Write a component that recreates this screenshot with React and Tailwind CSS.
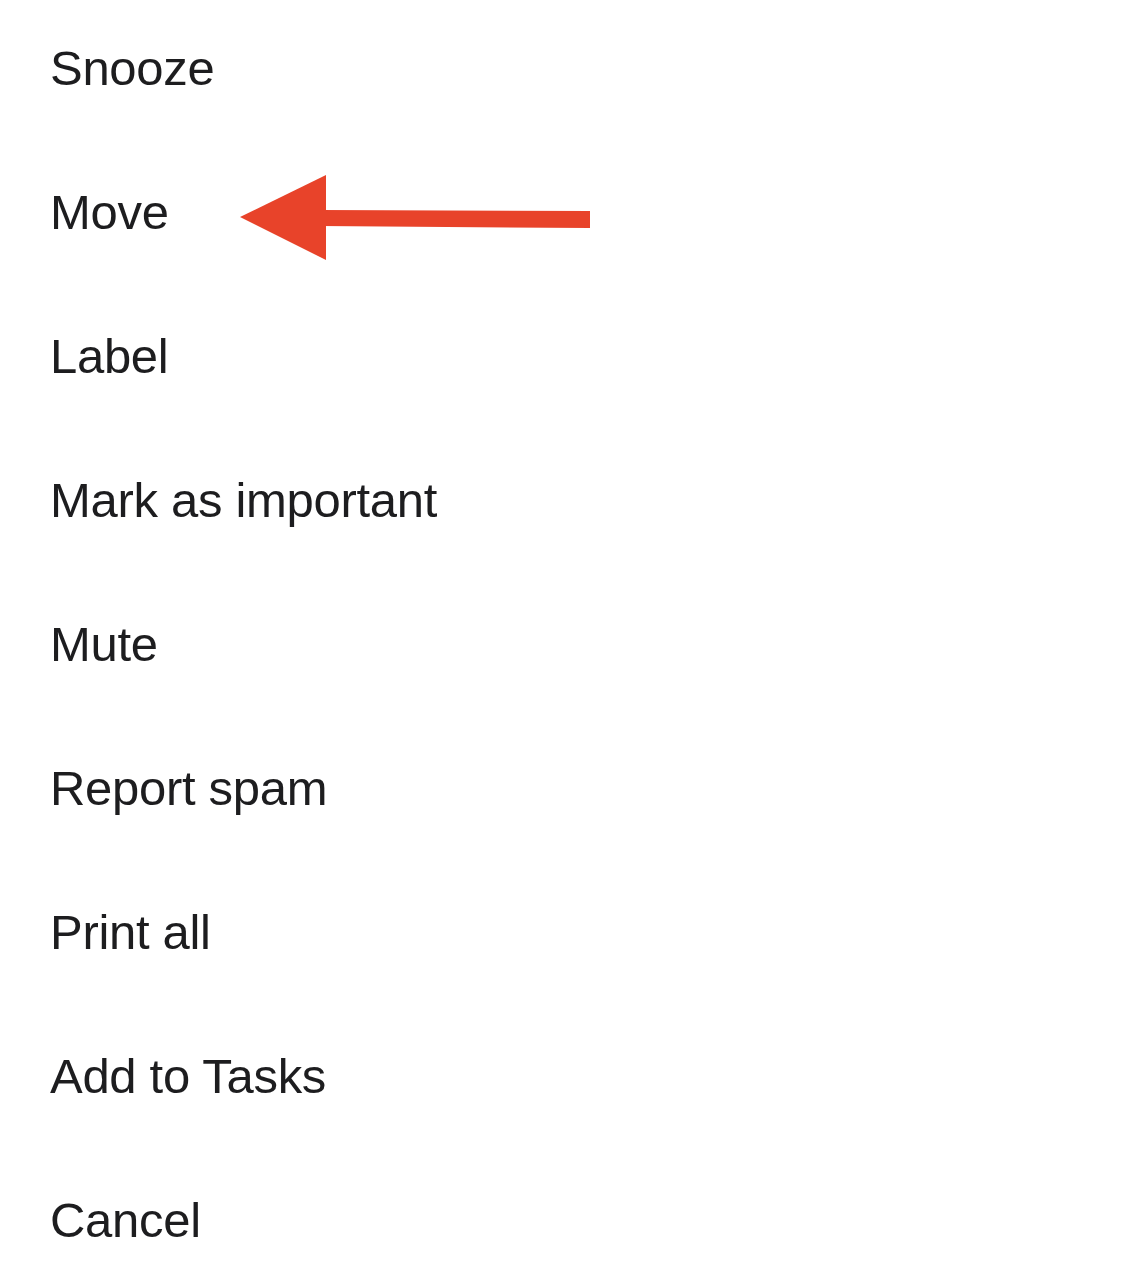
import React from 'react';

const items = [
  'Snooze',
  'Move',
  'Label',
  'Mark as important',
  'Mute',
  'Report spam',
  'Print all',
  'Add to Tasks',
  'Cancel',
];

function Arrow() {
  return (
    <svg
      className="absolute left-[238px] top-[173px]"
      width="356"
      height="90"
      viewBox="238 173 356 90"
    >
      <polygon points="240,217 326,175 326,260" fill="#e8432a" />
      <polygon points="320,210 590,211 590,228 320,226" fill="#e8432a" />
    </svg>
  );
}

export default function App() {
  return (
    <div
      className="relative w-[1125px] h-[1286px] overflow-hidden bg-white text-[#1d1d1f]"
      style={{ fontFamily: '"Liberation Sans", Arial, sans-serif' }}
    >
      <div className="flex flex-col -mt-[4px]">
        {items.map((item) => (
          <div key={item} className="h-[144px] flex items-center pl-[50px]">
            <span className="text-[49px] leading-none tracking-[-0.3px]">{item}</span>
          </div>
        ))}
      </div>
      <Arrow />
    </div>
  );
}
